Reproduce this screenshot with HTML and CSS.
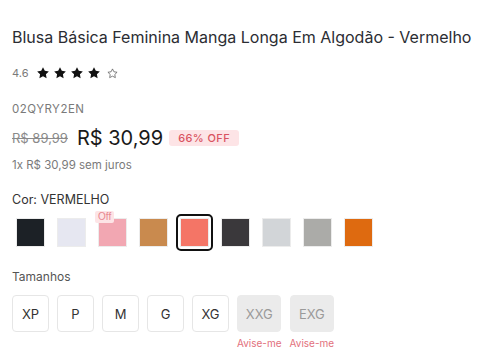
FILE: index.html
```html
<!DOCTYPE html>
<html lang="pt-BR">
<head>
    <meta charset="UTF-8">
    <meta name="viewport" content="width=device-width, initial-scale=1.0">
    <title>Blusa Básica Feminina Manga Longa Em Algodão - Vermelho</title>
    <link rel="stylesheet" href="styles.css">
</head>
<body>
    <div class="product">
        <h1 class="product-title">Blusa Básica Feminina Manga Longa Em Algodão - Vermelho</h1>

        <div class="rating">
            <span class="rating-value">4.6</span>
            <svg class="star" viewBox="0 0 24 24"><path d="M12 2l3.09 6.26L22 9.27l-5 4.87 1.18 6.88L12 17.77l-6.18 3.25L7 14.14 2 9.27l6.91-1.01L12 2z"></path></svg>
            <svg class="star" viewBox="0 0 24 24"><path d="M12 2l3.09 6.26L22 9.27l-5 4.87 1.18 6.88L12 17.77l-6.18 3.25L7 14.14 2 9.27l6.91-1.01L12 2z"></path></svg>
            <svg class="star" viewBox="0 0 24 24"><path d="M12 2l3.09 6.26L22 9.27l-5 4.87 1.18 6.88L12 17.77l-6.18 3.25L7 14.14 2 9.27l6.91-1.01L12 2z"></path></svg>
            <svg class="star" viewBox="0 0 24 24"><path d="M12 2l3.09 6.26L22 9.27l-5 4.87 1.18 6.88L12 17.77l-6.18 3.25L7 14.14 2 9.27l6.91-1.01L12 2z"></path></svg>
            <svg class="star star-empty" viewBox="0 0 24 24"><path d="M12 2l3.09 6.26L22 9.27l-5 4.87 1.18 6.88L12 17.77l-6.18 3.25L7 14.14 2 9.27l6.91-1.01L12 2z"></path></svg>
        </div>

        <div class="sku">02QYRY2EN</div>

        <div class="price-row">
            <span class="price-old">R$ 89,99</span>
            <span class="price-current">R$ 30,99</span>
            <span class="discount-badge">66% OFF</span>
        </div>

        <div class="installments">1x R$ 30,99 sem juros</div>

        <div class="section-label">Cor: <span>VERMELHO</span></div>
        <div class="swatches">
            <button class="swatch"><span class="swatch-color" style="background: #1c2126"></span></button>
            <button class="swatch"><span class="swatch-color" style="background: #e6e7f1"></span></button>
            <button class="swatch">
                <span class="swatch-color" style="background: #f2a7b2"></span>
                <span class="swatch-off">Off</span>
            </button>
            <button class="swatch"><span class="swatch-color" style="background: #c98a4e"></span></button>
            <button class="swatch selected"><span class="swatch-color" style="background: #f47566"></span></button>
            <button class="swatch"><span class="swatch-color" style="background: #3a383b"></span></button>
            <button class="swatch"><span class="swatch-color" style="background: #d2d5d8"></span></button>
            <button class="swatch"><span class="swatch-color" style="background: #ababa8"></span></button>
            <button class="swatch"><span class="swatch-color" style="background: #de6a10"></span></button>
        </div>

        <div class="section-label sizes-label">Tamanhos</div>
        <div class="sizes">
            <div class="size-item"><button class="size">XP</button></div>
            <div class="size-item"><button class="size">P</button></div>
            <div class="size-item"><button class="size">M</button></div>
            <div class="size-item"><button class="size">G</button></div>
            <div class="size-item"><button class="size">XG</button></div>
            <div class="size-item"><button class="size unavailable">XXG</button><span class="notify">Avise-me</span></div>
            <div class="size-item"><button class="size unavailable">EXG</button><span class="notify">Avise-me</span></div>
        </div>
    </div>
</body>
</html>
```

FILE: styles.css
```css
:root {
    --text-color: #2b2d33;
    --muted-color: #7a7a7a;
    --border-color: #e6e6e6;
    --sale-color: #d9535f;
    --sale-bg: #fde4e6;
}

body {
    margin: 0;
    background: #ffffff;
    font-family: "Inter", "Liberation Sans", sans-serif;
    color: var(--text-color);
}

.product {
    padding: 27px 12px 0;
}

.product-title {
    margin: 0;
    font-size: 16px;
    font-weight: 400;
    line-height: 20px;
    white-space: nowrap;
}

.rating {
    margin-top: 16px;
    height: 20px;
    display: flex;
    align-items: center;
    gap: 3px;
}

.rating-value {
    font-size: 11px;
    color: var(--muted-color);
    margin-right: 5px;
}

.star {
    width: 14px;
    height: 14px;
    fill: #111111;
}

.star-empty {
    width: 11px;
    height: 11px;
    fill: none;
    stroke: #555555;
    stroke-width: 1.6;
    margin-left: 3px;
}

.sku {
    margin-top: 18px;
    font-size: 11.5px;
    line-height: 16px;
    letter-spacing: 0.5px;
    color: var(--muted-color);
}

.price-row {
    margin-top: 9px;
    height: 24px;
    display: flex;
    align-items: center;
}

.price-old {
    font-size: 13px;
    color: #8a8a8a;
    text-decoration: line-through;
    margin-right: 9px;
}

.price-current {
    font-size: 20px;
    color: #1a1a1a;
    margin-right: 6px;
}

.discount-badge {
    background: var(--sale-bg);
    color: var(--sale-color);
    font-size: 11px;
    font-weight: 500;
    padding: 2px 9px;
    line-height: 12px;
    border-radius: 3px;
    letter-spacing: 0.4px;
}

.installments {
    margin-top: 7px;
    font-size: 11.5px;
    line-height: 16px;
    color: var(--muted-color);
}

.section-label {
    margin-top: 19px;
    font-size: 12.5px;
    line-height: 16px;
    color: #333333;
}

.swatches {
    margin-top: 6px;
    display: flex;
    gap: 4px;
}

.swatch {
    position: relative;
    width: 37px;
    height: 37px;
    padding: 2px;
    border: 2px solid transparent;
    border-radius: 5px;
    background: #ffffff;
    cursor: pointer;
    display: flex;
}

.swatch.selected {
    border-color: #111111;
}

.swatch-color {
    flex: 1;
    border: 1px solid #ececec;
}

.swatch-off {
    position: absolute;
    top: -5px;
    left: -1px;
    background: var(--sale-bg);
    color: #e88890;
    font-size: 10px;
    line-height: 12px;
    padding: 0 3px;
    border-radius: 2px;
}

.sizes-label {
    margin-top: 18px;
    font-size: 12px;
    color: #555555;
}

.sizes {
    margin-top: 10px;
    display: flex;
    gap: 8px;
}

.size-item {
    display: flex;
    flex-direction: column;
    align-items: center;
    gap: 4px;
}

.size {
    min-width: 37px;
    height: 37px;
    padding: 0 7px;
    border: 1px solid var(--border-color);
    border-radius: 4px;
    background: #ffffff;
    font-family: inherit;
    font-size: 13px;
    color: #333333;
    cursor: pointer;
}

.size.unavailable {
    width: 44px;
    background: #ebebeb;
    border-color: #ebebeb;
    color: #9a9a9a;
}

.notify {
    font-size: 10px;
    line-height: 14px;
    color: #e2707c;
    white-space: nowrap;
}
```
